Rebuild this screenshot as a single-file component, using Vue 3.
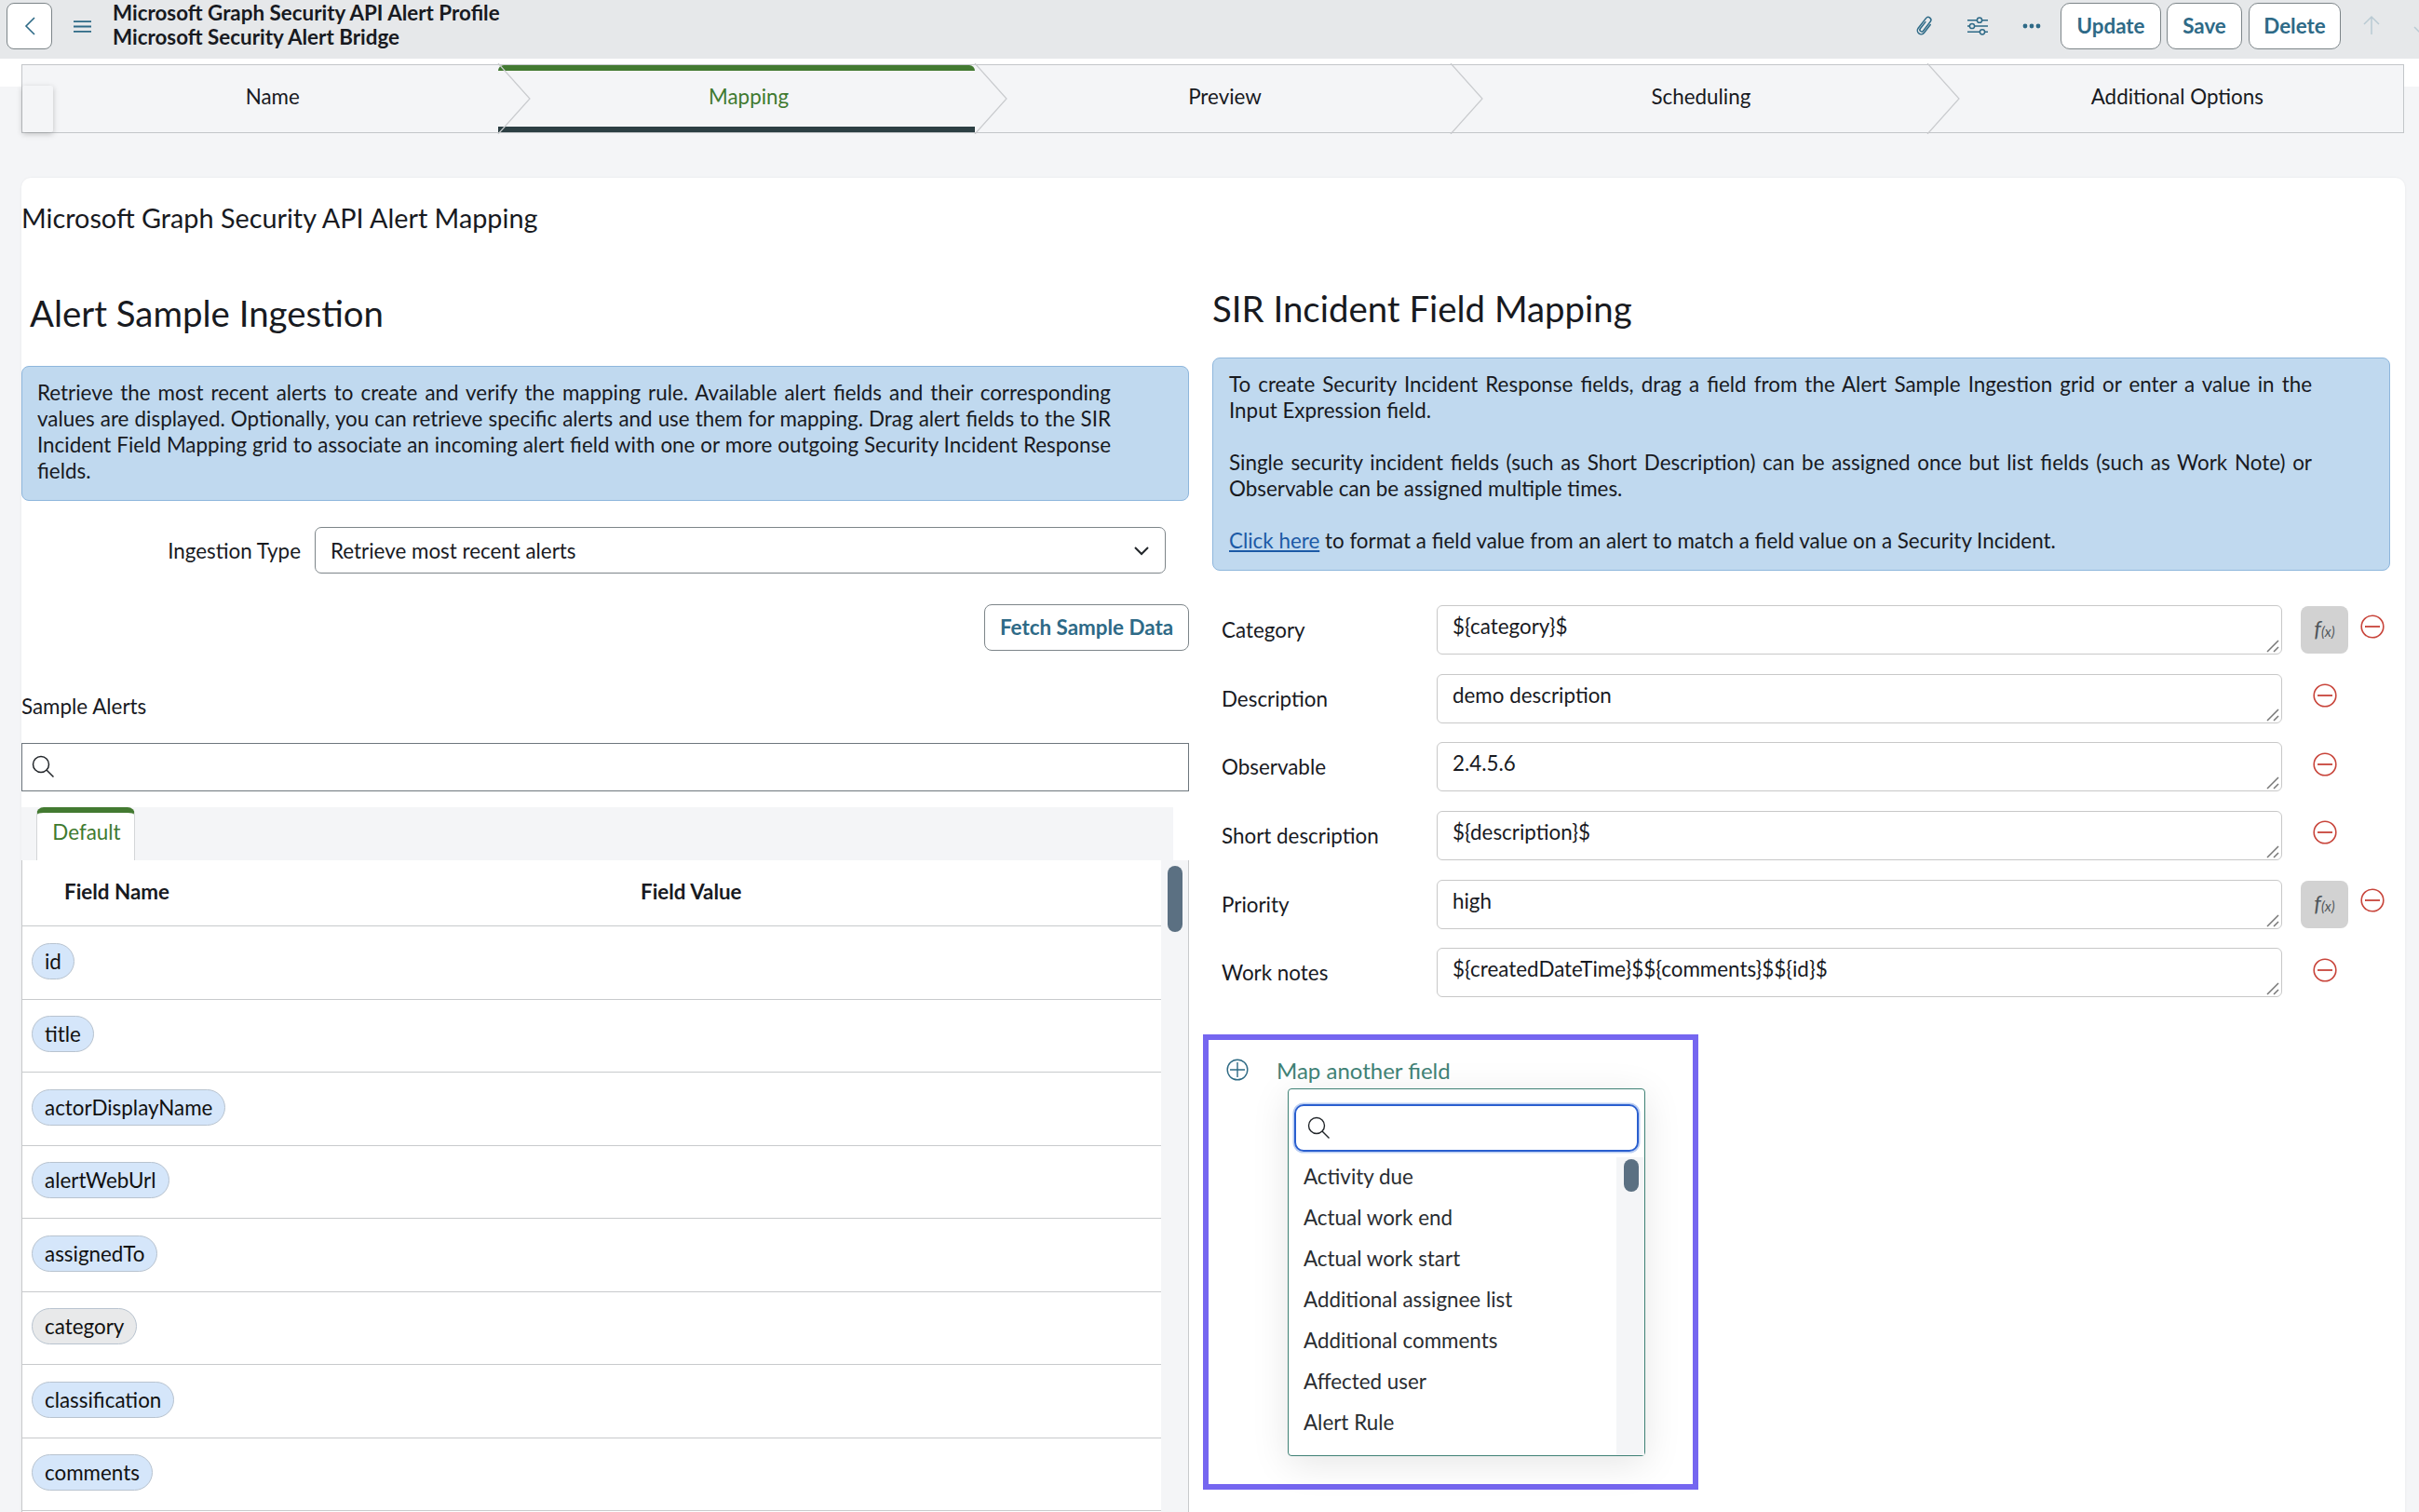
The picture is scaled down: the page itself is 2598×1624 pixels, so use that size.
<template>
  <div class="page">
    <header class="topbar">
      <button class="back-btn" type="button">
        <svg width="14" height="22" viewBox="0 0 14 22"><path d="M12 2 3 11l9 9" fill="none" stroke="#2e6a87" stroke-width="1.6" /></svg>
      </button>
      <svg class="menu-icon" width="19" height="13" viewBox="0 0 19 13"><path d="M0 1.2h19M0 6.5h19M0 11.8h19" stroke="#2e6a87" stroke-width="1.8" /></svg>
      <div class="record-title">
        <div>Microsoft Graph Security API Alert Profile</div>
        <div>Microsoft Security Alert Bridge</div>
      </div>
      <div class="actions">
        <svg class="clip" width="22" height="24" viewBox="0 0 22 24"><path d="M15 7V18a4 4 0 0 1-8 0V4.500a3 3 0 0 1 6 0V17a2 2 0 0 1-4 0V8" transform="rotate(38 11 12)" fill="none" stroke="#2e6a87" stroke-width="1.500" stroke-linecap="round" /></svg>
        <svg class="sliders" width="22" height="20" viewBox="0 0 22 20">
          <path d="M0 3.700h22M0 10h22M0 16.300h22" stroke="#2e6a87" stroke-width="1.500" />
          <circle cx="13" cy="3.700" r="2.600" fill="#e6e8ea" stroke="#2e6a87" stroke-width="1.500" />
          <circle cx="5" cy="10" r="2.600" fill="#e6e8ea" stroke="#2e6a87" stroke-width="1.500" />
          <circle cx="16" cy="16.300" r="2.600" fill="#e6e8ea" stroke="#2e6a87" stroke-width="1.500" />
        </svg>
        <svg class="dots" width="20" height="6" viewBox="0 0 20 6"><circle cx="3" cy="3" r="2.400" fill="#2e6a87" /><circle cx="10" cy="3" r="2.400" fill="#2e6a87" /><circle cx="17" cy="3" r="2.400" fill="#2e6a87" /></svg>
        <button class="top-btn update" type="button">Update</button>
        <button class="top-btn save" type="button">Save</button>
        <button class="top-btn delete" type="button">Delete</button>
        <svg class="arrow-up" width="20" height="22" viewBox="0 0 20 22"><path d="M10 21V2M2 10l8-8 8 8" fill="none" stroke="#b9cad3" stroke-width="1.500" /></svg>
        <svg class="arrow-down" width="20" height="22" viewBox="0 0 20 22"><path d="M10 1v19M2 12l8 8 8-8" fill="none" stroke="#b9cad3" stroke-width="1.500" /></svg>
      </div>
    </header>

    <nav class="stepper">
      <div v-for="(step, i) in steps" :key="step" class="step" :class="{ active: i === 1 }">
        <span>{{ step }}</span>
        <svg v-if="i < 4" class="chevron" width="38" height="76" viewBox="0 0 38 76"><path d="M1 0 35 38 1 76" fill="none" stroke="#c9cbce" stroke-width="1.200" /></svg>
      </div>
      <div class="stepper-tab"></div>
    </nav>

    <main class="card">
      <h1 class="card-title">Microsoft Graph Security API Alert Mapping</h1>
      <div class="columns">
        <section class="left-col">
          <h2 class="left-heading">Alert Sample Ingestion</h2>
          <div class="info-box left-info">
            Retrieve the most recent alerts to create and verify the mapping rule. Available alert fields and their corresponding values are displayed. Optionally, you can retrieve specific alerts and use them for mapping. Drag alert fields to the SIR Incident Field Mapping grid to associate an incoming alert field with one or more outgoing Security Incident Response fields.
          </div>
          <div class="ingestion-row">
            <label class="ingestion-label">Ingestion Type</label>
            <div class="fake-select">
              <span>Retrieve most recent alerts</span>
              <svg width="18" height="11" viewBox="0 0 18 11"><path d="M2 2l7 7 7-7" fill="none" stroke="#22262a" stroke-width="2" /></svg>
            </div>
          </div>
          <div class="fetch-row">
            <button class="fetch-btn" type="button">Fetch Sample Data</button>
          </div>
          <div class="sample-label">Sample Alerts</div>
          <div class="search-box">
            <svg width="26" height="26" viewBox="0 0 26 26"><circle cx="11" cy="11" r="8.500" fill="none" stroke="#22262a" stroke-width="1.500" /><path d="M17 17l7.500 7.500" stroke="#22262a" stroke-width="1.500" /></svg>
          </div>
          <div class="tab-strip">
            <div class="tab">Default</div>
          </div>
          <div class="grid-wrap">
            <div class="grid-main">
              <div class="grid-head">
                <span class="col-name">Field Name</span>
                <span class="col-value">Field Value</span>
              </div>
              <div v-for="field in fields" :key="field.name" class="grid-row">
                <span class="pill" :class="{ grey: field.grey }">{{ field.name }}</span>
              </div>
            </div>
            <div class="grid-track"><div class="grid-thumb"></div></div>
          </div>
        </section>

        <section class="right-col">
          <h2 class="right-heading">SIR Incident Field Mapping</h2>
          <div class="info-box right-info">
            <p>To create Security Incident Response fields, drag a field from the Alert Sample Ingestion grid or enter a value in the Input Expression field.</p>
            <p>Single security incident fields (such as Short Description) can be assigned once but list fields (such as Work Note) or Observable can be assigned multiple times.</p>
            <p><a class="link">Click here</a> to format a field value from an alert to match a field value on a Security Incident.</p>
          </div>
          <div class="map-rows">
            <div v-for="row in mappings" :key="row.label" class="map-row">
              <label class="map-label">{{ row.label }}</label>
              <textarea class="map-input" :value="row.value"></textarea>
              <div class="map-slot">
                <button v-if="row.fx" class="fx-btn" type="button"><i>f</i><i class="fx-small">(x)</i></button>
                <svg v-else class="row-minus" width="26" height="26" viewBox="0 0 26 26"><circle cx="13" cy="13" r="11.800" fill="none" stroke="#c8443a" stroke-width="1.600" /><path d="M5 13h16" stroke="#c8443a" stroke-width="1.800" /></svg>
              </div>
              <svg v-if="row.fx" class="fx-minus" width="26" height="26" viewBox="0 0 26 26"><circle cx="13" cy="13" r="11.800" fill="none" stroke="#c8443a" stroke-width="1.600" /><path d="M5 13h16" stroke="#c8443a" stroke-width="1.800" /></svg>
            </div>
          </div>

          <div class="highlight">
            <div class="map-another">
              <svg width="24" height="24" viewBox="0 0 24 24"><circle cx="12" cy="12" r="10.800" fill="none" stroke="#2d6a84" stroke-width="1.400" /><path d="M12 4v16M4 12h16" stroke="#2d6a84" stroke-width="1.400" /></svg>
              <span>Map another field</span>
            </div>
            <div class="dropdown">
              <div class="dd-search">
                <svg width="26" height="26" viewBox="0 0 26 26"><circle cx="11" cy="11" r="8.500" fill="none" stroke="#22262a" stroke-width="1.400" /><path d="M17 17l7.500 7.500" stroke="#22262a" stroke-width="1.400" /></svg>
              </div>
              <div class="dd-body">
                <ul class="dd-list">
                  <li v-for="item in options" :key="item">{{ item }}</li>
                </ul>
                <div class="dd-track"><div class="dd-thumb"></div></div>
              </div>
            </div>
          </div>
        </section>
      </div>
    </main>
  </div>
</template>

<script setup>
const steps = ["Name", "Mapping", "Preview", "Scheduling", "Additional Options"];

const fields = [
  { name: "id" },
  { name: "title" },
  { name: "actorDisplayName" },
  { name: "alertWebUrl" },
  { name: "assignedTo" },
  { name: "category", grey: true },
  { name: "classification" },
  { name: "comments" },
];

const mappings = [
  { label: "Category", value: "${category}$", fx: true },
  { label: "Description", value: "demo description" },
  { label: "Observable", value: "2.4.5.6" },
  { label: "Short description", value: "${description}$" },
  { label: "Priority", value: "high", fx: true },
  { label: "Work notes", value: "${createdDateTime}$${comments}$${id}$" },
];

const options = [
  "Activity due",
  "Actual work end",
  "Actual work start",
  "Additional assignee list",
  "Additional comments",
  "Affected user",
  "Alert Rule",
];
</script>

<style>
html,
body {
  margin: 0;
  overflow: hidden;
}
</style>

<style scoped>
.page {
  width: 2598px;
  height: 1624px;
  overflow: hidden;
  background: linear-gradient(#fff 93px, #f4f5f7 93px);
  font-family: Lato, "Noto Sans", sans-serif;
  font-size: 22.4px;
  color: #181a1f;
}

.topbar {
  height: 63px;
  box-sizing: border-box;
  padding-top: 3px;
  padding-left: 7px;
  background: #e6e8ea;
  display: flex;
  align-items: flex-start;
}

.back-btn {
  width: 49px;
  height: 50px;
  padding: 0;
  background: #fff;
  border: 1.5px solid #7d8589;
  border-radius: 8px;
  display: flex;
  align-items: center;
  justify-content: center;
}

.menu-icon {
  margin: 19px 23px 0 23px;
}

.record-title {
  font-weight: 700;
  line-height: 26px;
  margin-top: -2.5px;
}

.actions {
  margin-left: auto;
  display: flex;
  align-items: center;
  height: 50px;
  width: 542px;
}

.actions > * {
  flex: none;
}

.sliders {
  margin-left: 35px;
}

.dots {
  margin-left: 37px;
}

.top-btn {
  height: 50px;
  padding: 0 0 2px;
  background: #fff;
  border: 1.5px solid #7d8589;
  border-radius: 10px;
  font: 700 22.4px Lato, sans-serif;
  color: #2e6a87;
}

.update {
  width: 108px;
  margin-left: 21px;
}

.save {
  width: 81px;
  margin-left: 6px;
}

.delete {
  width: 99px;
  margin-left: 7px;
}

.arrow-up {
  margin: 0 0 2px 23px;
}

.arrow-down {
  margin-left: 34px;
}

.stepper {
  position: relative;
  margin: 6px 16px 0 23px;
  height: 74px;
  box-sizing: border-box;
  border: 1.5px solid #c3c6c9;
  background: #f4f5f7;
  display: flex;
}

.step {
  position: relative;
  flex: 1;
  display: flex;
  align-items: center;
  justify-content: center;
  padding-left: 26px;
  padding-bottom: 6px;
}

.step.active {
  color: #3f7a30;
}

.step.active::before {
  content: "";
  position: absolute;
  left: 0;
  right: 0;
  top: 0;
  height: 6px;
  background: #437a31;
  border-radius: 8px 8px 0 0;
}

.step.active::after {
  content: "";
  position: absolute;
  left: 0;
  right: 0;
  bottom: 0;
  height: 6px;
  background: #2c3f43;
}

.chevron {
  position: absolute;
  left: calc(100% - 1px);
  top: -2px;
  z-index: 1;
}

.stepper-tab {
  position: absolute;
  left: 0;
  bottom: 0;
  width: 33px;
  height: 50px;
  background: #f4f5f7;
  box-shadow: 0 2px 6px rgba(0, 0, 0, 0.22);
  border-radius: 2px;
}

.card {
  margin: 48px 15px 0 23px;
  height: 1500px;
  background: #fff;
  border-radius: 10px 10px 0 0;
  box-shadow: 0 0 3px rgba(0, 0, 0, 0.06);
}

.card-title {
  margin: 0;
  padding-top: 23px;
  font-size: 28.8px;
  font-weight: 400;
  line-height: 40px;
}

.columns {
  display: grid;
  grid-template-columns: 1254px 1265px;
  column-gap: 25px;
}

.left-heading,
.right-heading {
  margin: 0;
  font-size: 38.4px;
  font-weight: 400;
  line-height: 50px;
}

.left-heading {
  margin-top: 57px;
  padding-left: 9px;
}

.right-heading {
  margin-top: 52px;
}

.info-box {
  box-sizing: border-box;
  background: #c0d9ef;
  border: 1.5px solid #8eb6dc;
  border-radius: 8px;
  line-height: 28px;
  text-align: justify;
}

.left-info {
  margin-top: 32px;
  height: 145px;
  padding: 14px 83px 0 16px;
}

.right-info {
  margin-top: 28px;
  height: 229px;
  padding: 14px 83px 0 17px;
}

.right-info p {
  margin: 0 0 28px;
}

.link {
  color: #1c5aa6;
  text-decoration: underline;
}

.ingestion-row {
  display: flex;
  align-items: center;
  margin-top: 28px;
}

.ingestion-label {
  width: 300px;
  text-align: right;
}

.fake-select {
  margin-left: 15px;
  width: 914px;
  height: 50px;
  box-sizing: border-box;
  border: 1.5px solid #7d8589;
  border-radius: 7px;
  padding: 0 16px;
  display: flex;
  align-items: center;
  justify-content: space-between;
}

.fetch-row {
  display: flex;
  justify-content: flex-end;
  margin-top: 33px;
}

.fetch-btn {
  width: 220px;
  height: 50px;
  padding: 0 0 2px;
  background: #fff;
  border: 1.5px solid #7d8589;
  border-radius: 8px;
  font: 700 22.4px Lato, sans-serif;
  color: #2e6a87;
}

.sample-label {
  margin-top: 46px;
  line-height: 28px;
}

.search-box {
  margin-top: 25px;
  height: 52px;
  box-sizing: border-box;
  border: 1.5px solid #6e767d;
  display: flex;
  align-items: center;
  padding: 0 0 3px 9px;
}

.tab-strip {
  margin-top: 17px;
  width: 1237px;
  height: 57px;
  background: #f4f5f7;
  padding-left: 16px;
  box-sizing: border-box;
}

.tab {
  width: 106px;
  height: 57px;
  box-sizing: border-box;
  background: #fff;
  border-top: 6px solid #437a31;
  border-left: 1px solid #d4d6d8;
  border-right: 1px solid #d4d6d8;
  border-radius: 8px 8px 0 0;
  color: #3f7a30;
  text-align: center;
  padding-left: 2px;
  line-height: 41px;
}

.grid-wrap {
  display: flex;
  height: 720px;
  box-sizing: border-box;
  border-left: 1.5px solid #c8cacc;
  border-right: 1.5px solid #c8cacc;
}

.grid-main {
  flex: 1;
}

.grid-head {
  height: 71px;
  box-sizing: border-box;
  border-bottom: 1.5px solid #c8cacc;
  display: flex;
  align-items: center;
  font-weight: 700;
  padding-bottom: 3px;
}

.col-name {
  margin-left: 45px;
  width: 619px;
}

.grid-row {
  height: 78.5px;
  box-sizing: border-box;
  border-bottom: 1.5px solid #c8cacc;
  display: flex;
  align-items: center;
  padding-left: 10px;
  padding-bottom: 3px;
}

.pill {
  height: 39px;
  box-sizing: border-box;
  padding: 0 13px;
  border-radius: 20px;
  background: #d5e6fa;
  border: 1.2px solid #b8c3cf;
  display: flex;
  align-items: center;
  color: #111;
}

.pill.grey {
  background: #e8e9ea;
}

.grid-track {
  width: 29px;
  background: #f4f5f7;
  padding: 6px 0 0 7px;
  box-sizing: border-box;
}

.grid-thumb {
  width: 16px;
  height: 71px;
  border-radius: 8px;
  background: #5b7082;
}

.map-rows {
  margin-top: 37px;
  display: flex;
  flex-direction: column;
  gap: 20.7px;
}

.map-row {
  display: flex;
  align-items: center;
  height: 53px;
  padding-left: 10px;
}

.map-label {
  width: 231px;
  flex: none;
}

.map-input {
  width: 908px;
  height: 53px;
  flex: none;
  box-sizing: border-box;
  border: 1.5px solid #c8c8c8;
  border-radius: 6px;
  padding: 8px 16px 4px;
  font: 22.4px/28px Lato, sans-serif;
  color: #181a1f;
  resize: none;
  outline: none;
  background: #fff url("data:image/svg+xml,%3Csvg xmlns='http://www.w3.org/2000/svg' width='14' height='14'%3E%3Cpath d='M1 13 13 1M8 13l5-5' stroke='%23777' stroke-width='1.500'/%3E%3C/svg%3E") no-repeat right 2px bottom 1px;
}

.map-slot {
  margin-left: 20px;
  width: 51px;
  flex: none;
  display: flex;
  justify-content: center;
}

.row-minus {
  margin-top: -6.5px;
}

.fx-btn {
  width: 51px;
  height: 51px;
  border: none;
  border-radius: 8px;
  background: #d2d2d2;
  color: #50565b;
  font: 24px Lato, sans-serif;
  padding: 0 0 4px;
}

.fx-small {
  font-size: 15px;
}

.fx-minus {
  margin: -8px 0 0 13px;
}

.highlight {
  margin: 40px 0 0 -10px;
  width: 532px;
  height: 489px;
  box-sizing: border-box;
  border: 6px solid #7566f0;
}

.map-another {
  display: flex;
  align-items: center;
  padding: 20px 0 0 19px;
  gap: 30px;
  height: 24px;
  color: #3f8175;
  font-size: 24px;
}

.dropdown {
  margin: 8px 0 0 85px;
  width: 384px;
  height: 395px;
  box-sizing: border-box;
  border: 1.5px solid #3f8175;
  border-radius: 4px;
  background: #fff;
  box-shadow: 0 8px 40px rgba(0, 0, 0, 0.1);
  padding-top: 16px;
}

.dd-search {
  margin-left: 6px;
  width: 370px;
  height: 51px;
  box-sizing: border-box;
  border: 2.500px solid #2a5fcf;
  border-radius: 10px;
  box-shadow: 0 0 0 1.500px #b9cdf2;
  display: flex;
  align-items: center;
  padding: 0 0 2px 11px;
}

.dd-body {
  margin-top: 6px;
  display: flex;
  height: 320px;
}

.dd-list {
  flex: 1;
  margin: 0;
  padding: 0 0 0 16px;
  list-style: none;
  color: #2a2d31;
}

.dd-list li {
  height: 44px;
  line-height: 42px;
}

.dd-track {
  width: 30px;
  background: #f4f5f7;
  padding: 2px 0 0 8px;
  box-sizing: border-box;
}

.dd-thumb {
  width: 16px;
  height: 35px;
  border-radius: 8px;
  background: #5b7082;
}
</style>
